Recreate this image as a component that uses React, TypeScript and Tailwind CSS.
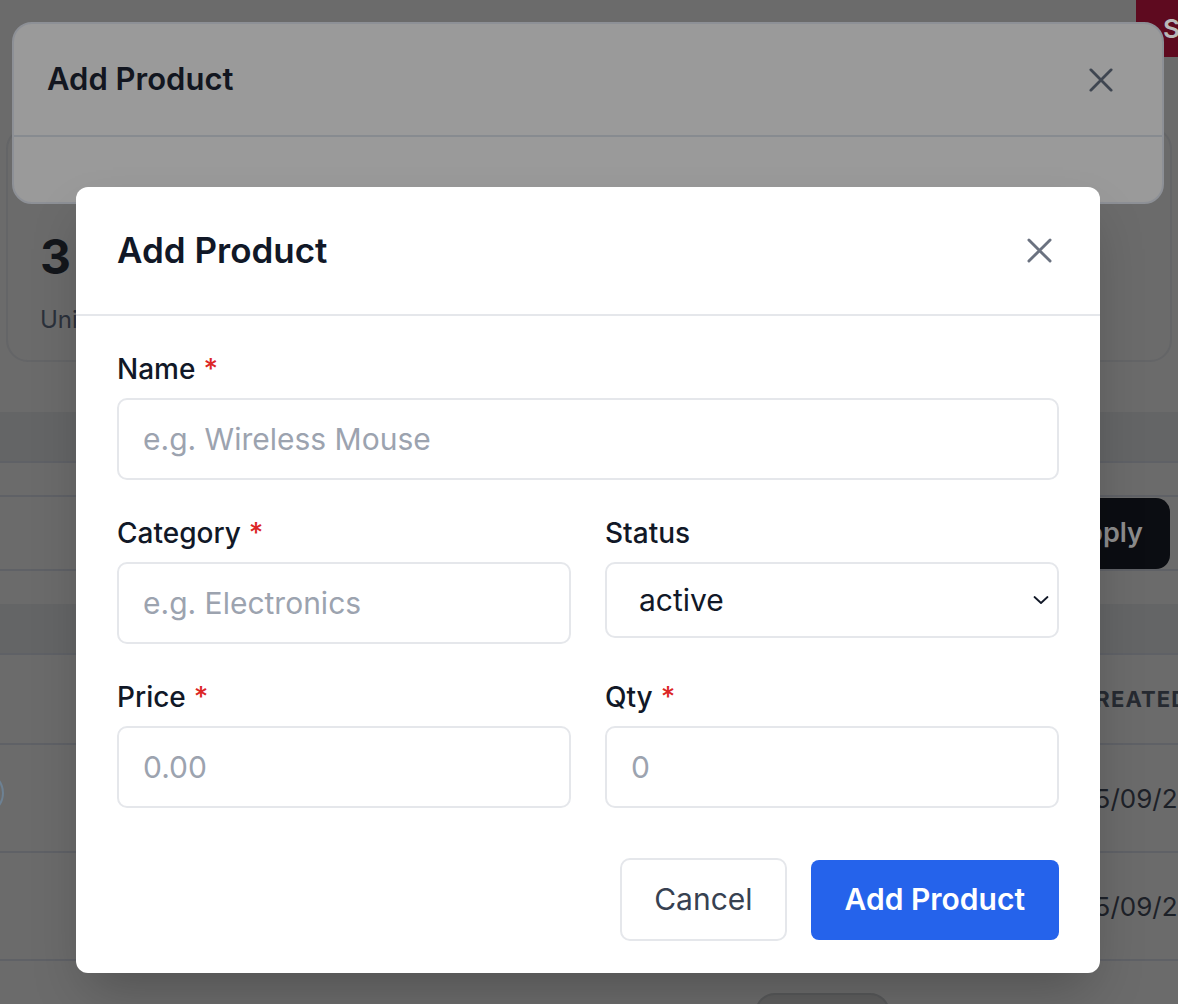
import React from 'react';

const Field: React.FC<{ label: string; required?: boolean; children: React.ReactNode }> = ({
  label,
  required,
  children,
}) => (
  <div>
    <label className="mb-[11px] block text-[28px] leading-[36px] font-medium text-[#111827]">
      {label}
      {required && <span className="ml-[8px] text-[#dc2626]">*</span>}
    </label>
    {children}
  </div>
);

const inputCls =
  'block h-[82px] w-full rounded-[10px] border-2 border-[#e5e7eb] bg-white px-[24px] text-[30px] text-[#111827] placeholder:text-[#9ca3af] outline-none';

const CloseIcon: React.FC<{ className?: string }> = ({ className }) => (
  <svg viewBox="0 0 26 26" className={className} fill="none" stroke="currentColor" strokeWidth="3" strokeLinecap="round">
    <path d="M2 2 L24 24 M24 2 L2 24" />
  </svg>
);

const App: React.FC = () => {
  return (
    <div className="relative h-[1004px] w-full overflow-hidden bg-[#6b6b6b] font-['Inter',sans-serif]">
      {/* dimmed page behind */}
      <div className="flex justify-end">
        <button className="h-[57px] w-[42px] overflow-hidden whitespace-nowrap bg-[#5e0a1f] pl-[27px] text-left text-[26px] font-semibold text-[#b8b8b8]">
          Sign out
        </button>
      </div>

      <div className="mx-[6px] mt-[70px] h-[235px] rounded-[22px] border-2 border-[#646567] px-[32px] pt-[104px]">
        <div className="text-[48px] leading-[48px] font-bold text-[#13161b]">3</div>
        <div className="mt-[24px] text-[24px] leading-[30px] text-[#2b313b]">Units in stock</div>
      </div>

      <div className="mt-[50px] h-[51px] border-b-2 border-[#5f6166] bg-[#646566]" />
      <div className="h-[34px] border-b-2 border-[#5f6166]" />
      <div className="flex h-[74px] items-center justify-end border-b-2 border-[#5f6166] pr-[8px]">
        <button className="h-[71px] rounded-[14px] bg-[#0b0d12] px-[27px] text-[27px] font-semibold text-[#8b8b8b]">
          Apply
        </button>
      </div>
      <div className="h-[33px]" />
      <div className="h-[51px] border-b-2 border-[#5f6166] bg-[#646566]" />
      <div className="flex h-[90px] items-center border-b-2 border-[#5f6166] pl-[1078px]">
        <span className="whitespace-nowrap text-[22px] font-bold tracking-wider text-[#262a31]">CREATED AT</span>
      </div>
      {['15/09/2025', '15/09/2025'].map((d, i) => (
        <div key={i} className="relative flex h-[108px] items-center border-b-2 border-[#5f6166] pl-[1084px]">
          {i === 0 && (
            <div className="absolute top-[26px] -left-[40px] h-[44px] w-[44px] rounded-full border-2 border-[#6d8193]" />
          )}
          <span className="whitespace-nowrap text-[26px] text-[#1d2128]">{d}</span>
        </div>
      ))}
      <div className="mt-[32px] ml-[755px] h-[40px] w-[135px] rounded-t-[20px] border-2 border-[#575859] bg-[#5e5e5e]" />

      {/* previous modal frame */}
      <div className="absolute top-[22px] right-[14px] left-[12px] h-[182px] rounded-[20px] border-2 border-[#8d9096] bg-[#9a9a9a]">
        <div className="flex h-[113px] items-center justify-between border-b-2 border-[#878b90] pr-[49px] pl-[33px]">
          <h2 className="text-[31px] font-semibold text-[#121620]">Add Product</h2>
          <CloseIcon className="h-[24px] w-[24px] text-[#3f4651]" />
        </div>
      </div>

      {/* modal */}
      <div className="absolute top-[187px] left-[76px] w-[1024px] rounded-[12px] bg-white shadow-2xl">
        <div className="flex h-[129px] items-center justify-between border-b-2 border-[#e5e7eb] pr-[48px] pl-[41px]">
          <h2 className="text-[35px] font-semibold text-[#111827]">Add Product</h2>
          <button className="text-[#6b7280]">
            <CloseIcon className="h-[25px] w-[25px]" />
          </button>
        </div>

        <div className="px-[41px] pt-[35px] pb-[32px]">
          <Field label="Name" required>
            <input className={inputCls} placeholder="e.g. Wireless Mouse" />
          </Field>

          <div className="mt-[35px] grid grid-cols-2 gap-x-[34px] gap-y-[35px]">
            <Field label="Category" required>
              <input className={inputCls} placeholder="e.g. Electronics" />
            </Field>
            <Field label="Status">
              <div className="relative flex h-[76px] items-center rounded-[10px] border-2 border-[#e5e7eb] pr-[8px] pl-[32px]">
                <span className="flex-1 text-[30px] text-[#111827]">active</span>
                <svg viewBox="0 0 16 10" className="h-[10px] w-[16px]" fill="none" stroke="#111827" strokeWidth="1.8" strokeLinecap="round" strokeLinejoin="round">
                  <path d="M1.5 2 L8 8 L14.5 2" />
                </svg>
              </div>
            </Field>
            <Field label="Price" required>
              <input className={inputCls} placeholder="0.00" />
            </Field>
            <Field label="Qty" required>
              <input className={inputCls} placeholder="0" />
            </Field>
          </div>

          <div className="mt-[50px] flex items-center justify-end gap-[24px]">
            <button className="h-[83px] rounded-[10px] border-2 border-[#e5e7eb] bg-white px-[32px] text-[30px] text-[#374151]">
              Cancel
            </button>
            <button className="h-[80px] rounded-[8px] bg-[#2563eb] px-[34px] text-[30px] font-semibold text-white">
              Add Product
            </button>
          </div>
        </div>
      </div>
    </div>
  );
};

export default App;
